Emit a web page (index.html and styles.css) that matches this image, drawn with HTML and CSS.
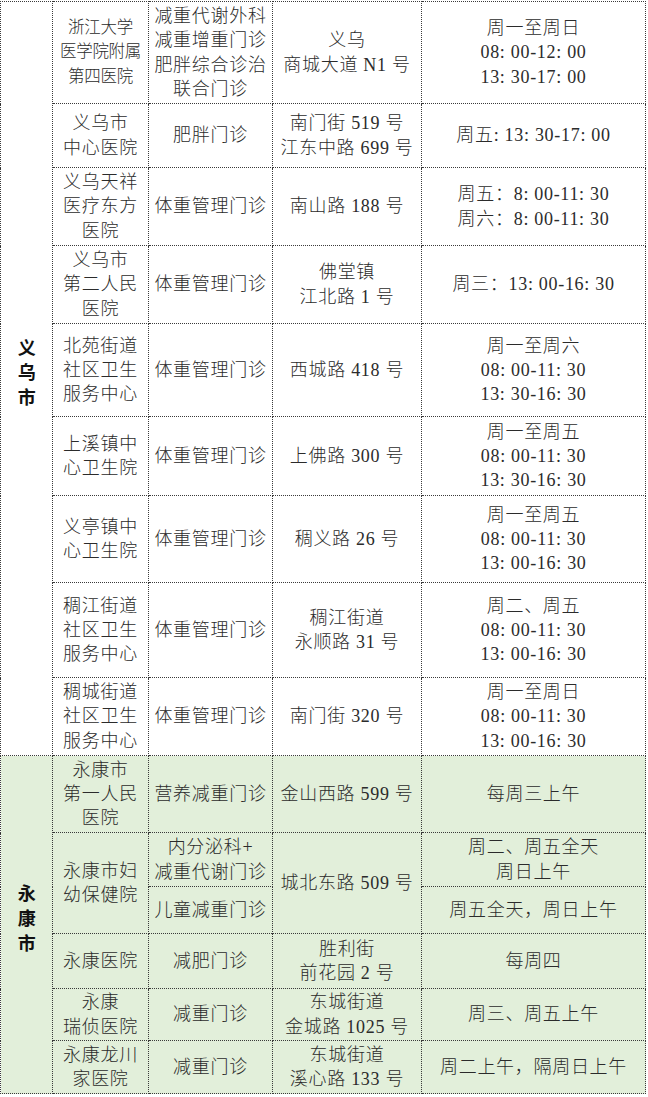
FILE: index.html
```html
<!DOCTYPE html>
<html lang="zh-CN">
<head>
<meta charset="utf-8">
<title>减重门诊一览</title>
<link rel="stylesheet" href="styles.css">
</head>
<body>
<table class="clinics">
  <colgroup>
    <col class="c-region">
    <col class="c-name">
    <col class="c-dept">
    <col class="c-addr">
    <col class="c-time">
  </colgroup>
  <tbody>
    <tr class="r1">
      <td class="region" rowspan="9"><span class="vert">义乌市</span></td>
      <td class="tight">浙江大学<br>医学院附属<br>第四医院</td>
      <td>减重代谢外科<br>减重增重门诊<br>肥胖综合诊治<br>联合门诊</td>
      <td>义乌<br>商城大道 N1 号</td>
      <td>周一至周日<br>08: 00-12: 00<br>13: 30-17: 00</td>
    </tr>
    <tr class="r2">
      <td>义乌市<br>中心医院</td>
      <td>肥胖门诊</td>
      <td>南门街 519 号<br>江东中路 699 号</td>
      <td>周五: 13: 30-17: 00</td>
    </tr>
    <tr class="r3">
      <td>义乌天祥<br>医疗东方<br>医院</td>
      <td>体重管理门诊</td>
      <td>南山路 188 号</td>
      <td>周五：8: 00-11: 30<br>周六：8: 00-11: 30</td>
    </tr>
    <tr class="r4">
      <td>义乌市<br>第二人民<br>医院</td>
      <td>体重管理门诊</td>
      <td>佛堂镇<br>江北路 1 号</td>
      <td>周三：13: 00-16: 30</td>
    </tr>
    <tr class="r5">
      <td>北苑街道<br>社区卫生<br>服务中心</td>
      <td>体重管理门诊</td>
      <td>西城路 418 号</td>
      <td>周一至周六<br>08: 00-11: 30<br>13: 30-16: 30</td>
    </tr>
    <tr class="r6">
      <td>上溪镇中<br>心卫生院</td>
      <td>体重管理门诊</td>
      <td>上佛路 300 号</td>
      <td>周一至周五<br>08: 00-11: 30<br>13: 30-16: 30</td>
    </tr>
    <tr class="r7">
      <td>义亭镇中<br>心卫生院</td>
      <td>体重管理门诊</td>
      <td>稠义路 26 号</td>
      <td>周一至周五<br>08: 00-11: 30<br>13: 00-16: 30</td>
    </tr>
    <tr class="r8">
      <td>稠江街道<br>社区卫生<br>服务中心</td>
      <td>体重管理门诊</td>
      <td>稠江街道<br>永顺路 31 号</td>
      <td>周二、周五<br>08: 00-11: 30<br>13: 00-16: 30</td>
    </tr>
    <tr class="r9">
      <td>稠城街道<br>社区卫生<br>服务中心</td>
      <td>体重管理门诊</td>
      <td>南门街 320 号</td>
      <td>周一至周日<br>08: 00-11: 30<br>13: 00-16: 30</td>
    </tr>
    <tr class="r10 green">
      <td class="region" rowspan="6"><span class="vert">永康市</span></td>
      <td>永康市<br>第一人民<br>医院</td>
      <td>营养减重门诊</td>
      <td>金山西路 599 号</td>
      <td>每周三上午</td>
    </tr>
    <tr class="r11a green">
      <td rowspan="2">永康市妇<br>幼保健院</td>
      <td>内分泌科+<br>减重代谢门诊</td>
      <td rowspan="2">城北东路 509 号</td>
      <td>周二、周五全天<br>周日上午</td>
    </tr>
    <tr class="r11b green">
      <td>儿童减重门诊</td>
      <td>周五全天，周日上午</td>
    </tr>
    <tr class="r12 green">
      <td>永康医院</td>
      <td>减肥门诊</td>
      <td>胜利街<br>前花园 2 号</td>
      <td>每周四</td>
    </tr>
    <tr class="r13 green">
      <td>永康<br>瑞侦医院</td>
      <td>减重门诊</td>
      <td>东城街道<br>金城路 1025 号</td>
      <td>周三、周五上午</td>
    </tr>
    <tr class="r14 green">
      <td>永康龙川<br>家医院</td>
      <td>减重门诊</td>
      <td>东城街道<br>溪心路 133 号</td>
      <td>周二上午，隔周日上午</td>
    </tr>
  </tbody>
</table>
</body>
</html>
```
FILE: styles.css
```css
html, body {
  margin: 0;
  padding: 0;
  background: #ffffff;
}

body {
  padding-top: 1px;
}

.clinics {
  border-collapse: collapse;
  table-layout: fixed;
  width: 645px;
  font-family: "Liberation Serif", "Noto Sans CJK SC", serif;
  font-size: 18px;
  font-weight: 300;
  line-height: 24.3px;
  letter-spacing: 0.7px;
  color: #2b2b2b;
}

.c-region { width: 52px; }
.c-name { width: 96px; }
.c-dept { width: 124px; }
.c-addr { width: 149px; }
.c-time { width: 224px; }

.clinics td {
  border: 1px dotted #3a3a3a;
  padding: 0 1px;
  text-align: center;
  vertical-align: middle;
  white-space: nowrap;
}

.clinics td.tight {
  font-size: 16.5px;
  letter-spacing: -0.3px;
}

.clinics td.region {
  padding: 0;
}

.vert {
  display: inline-block;
  writing-mode: vertical-rl;
  text-orientation: upright;
  font-family: "Noto Sans CJK SC", sans-serif;
  font-weight: 700;
  font-size: 18px;
  letter-spacing: 7px;
  color: #111;
}

.green td {
  background: #e2efda;
}

.r1 { height: 102px; }
.r2 { height: 64px; }
.r3 { height: 78px; }
.r4 { height: 78px; }
.r5 { height: 93px; }
.r6 { height: 79px; }
.r7 { height: 87px; }
.r8 { height: 95px; }
.r9 { height: 78px; }
.r10 { height: 77px; }
.r11a { height: 54px; }
.r11b { height: 47px; }
.r12 { height: 55px; }
.r13 { height: 52px; }
.r14 { height: 53px; }
```
